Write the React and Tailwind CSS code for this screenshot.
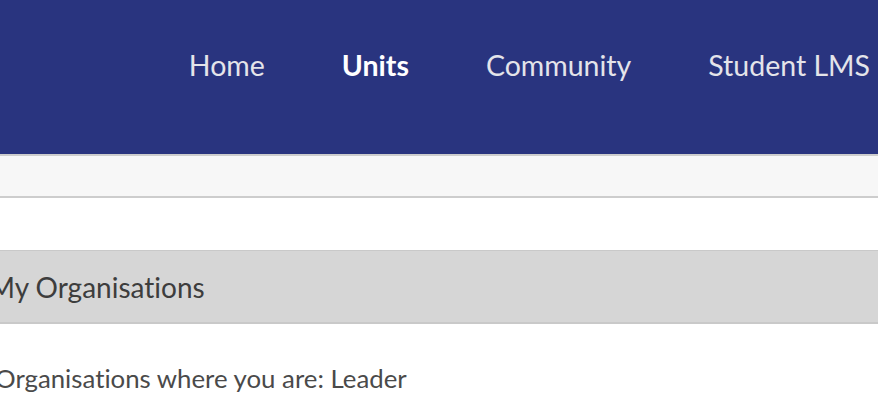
import React from "react";

const navItems = [
  { label: "Home", active: false },
  { label: "Units", active: true },
  { label: "Community", active: false },
  { label: "Student LMS", active: false },
];

export default function App() {
  return (
    <div
      className="w-[878px] h-[412px] overflow-hidden bg-white [font-variant-ligatures:none]"
      style={{ fontFamily: "Lato, 'Open Sans', sans-serif" }}
    >
      {/* top bar */}
      <header className="h-[154px] bg-[#29347f] flex items-start justify-end">
        <nav className="flex items-center gap-[77px] pt-[47px] pr-[8px]">
          {navItems.map((item) => (
            <a
              key={item.label}
              href="#"
              className={
                item.active
                  ? "text-[28.5px] leading-[36px] font-bold text-white"
                  : "text-[28.5px] leading-[36px] text-[#e4e4ea]"
              }
            >
              {item.label}
            </a>
          ))}
        </nav>
      </header>

      {/* breadcrumb strip */}
      <div className="h-[44px] bg-[#f7f7f7] border-t-2 border-b-2 border-[#cdcdcd]" />

      <div className="h-[52px]" />

      {/* panel */}
      <div className="h-[74px] bg-[#d6d6d6] border-t border-b-2 border-[#c9c9c9] flex items-center">
        <h2 className="-ml-[11px] text-[28px] leading-[36px] text-[#3d3d3d]">My Organisations</h2>
      </div>

      <p className="-ml-[5px] mt-[38px] text-[25.8px] leading-[32px] text-[#4a4a4a]">
        Organisations where you are: Leader
      </p>
    </div>
  );
}
